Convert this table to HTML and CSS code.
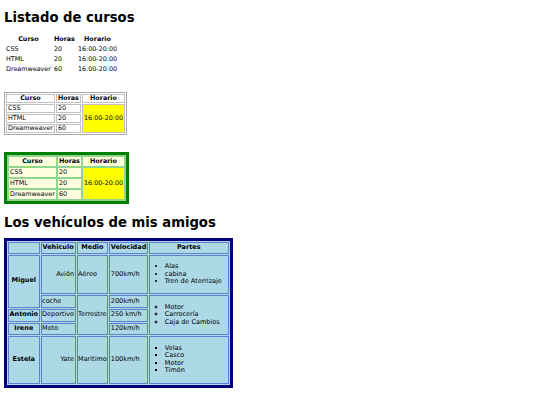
FILE: index.html
```html
<!DOCTYPE html>
<html lang="es">
<head>
<meta charset="utf-8">
<title>Tablas</title>
<link rel="stylesheet" href="styles.css">
</head>
<body>
<h1>Listado de cursos</h1>
<table class="t1">
  <tr><th>Curso</th><th>Horas</th><th>Horario</th></tr>
  <tr><td>CSS</td><td>20</td><td>16:00-20:00</td></tr>
  <tr><td>HTML</td><td>20</td><td>16:00-20:00</td></tr>
  <tr><td>Dreamweaver</td><td>60</td><td>16:00-20:00</td></tr>
</table>

<table class="t2">
  <tr><th>Curso</th><th>Horas</th><th>Horario</th></tr>
  <tr><td>CSS</td><td>20</td><td rowspan="3" class="yellow">16:00-20:00</td></tr>
  <tr><td>HTML</td><td>20</td></tr>
  <tr><td>Dreamweaver</td><td>60</td></tr>
</table>

<table class="t3">
  <tr><th>Curso</th><th>Horas</th><th>Horario</th></tr>
  <tr><td>CSS</td><td>20</td><td rowspan="3" class="yellow">16:00-20:00</td></tr>
  <tr><td>HTML</td><td>20</td></tr>
  <tr><td>Dreamweaver</td><td>60</td></tr>
</table>

<h2>Los vehículos de mis amigos</h2>
<table class="t4">
  <tr><th></th><th>Vehiculo</th><th>Medio</th><th>Velocidad</th><th class="c5">Partes</th></tr>
  <tr>
    <th rowspan="2">Miguel</th>
    <td class="right">Avión</td>
    <td>Aéreo</td>
    <td>700km/h</td>
    <td><ul class="disc"><li>Alas</li><li>cabina</li><li>Tren de Aterrizaje</li></ul></td>
  </tr>
  <tr>
    <td>coche</td>
    <td rowspan="3">Terrestre</td>
    <td>200km/h</td>
    <td rowspan="3"><ul class="circle"><li>Motor</li><li>Carrocería</li><li>Caja de Cambios</li></ul></td>
  </tr>
  <tr><th>Antonio</th><td>Deportivo</td><td>250 km/h</td></tr>
  <tr><th>Irene</th><td>Moto</td><td>120km/h</td></tr>
  <tr>
    <th>Estela</th>
    <td class="right">Yate</td>
    <td>Marítimo</td>
    <td>100km/h</td>
    <td><ul class="square"><li>Velas</li><li>Casco</li><li>Motor</li><li>Timón</li></ul></td>
  </tr>
</table>
</body>
</html>
```
FILE: styles.css
```css
body {
  margin: 4px;
  font-family: "DejaVu Sans", Verdana, sans-serif;
  font-size: 6.4px;
  color: #000;
  background: #fff;
}
h1, h2 {
  font-size: 13.2px;
  font-weight: bold;
  margin: 6px 0 9px;
  line-height: 15px;
}
h2 {
  margin: 11px 0 8px;
}
table {
  font-size: 6.4px;
  border-collapse: separate;
  margin-bottom: 17px;
}
th, td {
  padding: 0 1px;
  text-align: left;
  vertical-align: middle;
  line-height: 7.5px;
}
th {
  text-align: center;
  font-weight: bold;
}
.t1 {
  border-spacing: 1px;
}
.t1 th, .t1 td {
  padding: 1px 1px 0.5px;
}
.t2 {
  border: 1px solid #a8a8a8;
  border-spacing: 1px;
}
.t2 th, .t2 td {
  border: 1px solid #c0c0c0;
  line-height: 7px;
}
.yellow {
  background: #ffff00;
}
.t3 {
  border: 3px solid #008000;
  border-spacing: 0;
  background: #8fd48f;
  padding: 1px;
  margin-bottom: 9px;
}
.t3 th, .t3 td {
  border: 1px solid #8fd48f;
  background: #ffffe0;
  line-height: 9px;
}
.t3 td.yellow {
  background: #ffff00;
}
.t4 {
  border: 3px solid #000080;
  background: #add8e6;
  border-spacing: 1px;
  margin-bottom: 0;
  font-size: 6.5px;
}
.t4 th, .t4 td {
  border: 1px solid #5f7fcf;
  background: #add8e6;
  padding: 1px 0.5px;
  line-height: 7.6px;
}
.t4 .c5 { width: 77px; }
.t4 td.right {
  text-align: right;
}
.t4 ul {
  margin: 6.5px 0;
  padding-left: 5px;
  list-style-position: inside;
}
.disc { list-style-type: disc; }
.circle { list-style-type: circle; }
.square { list-style-type: square; }
```
